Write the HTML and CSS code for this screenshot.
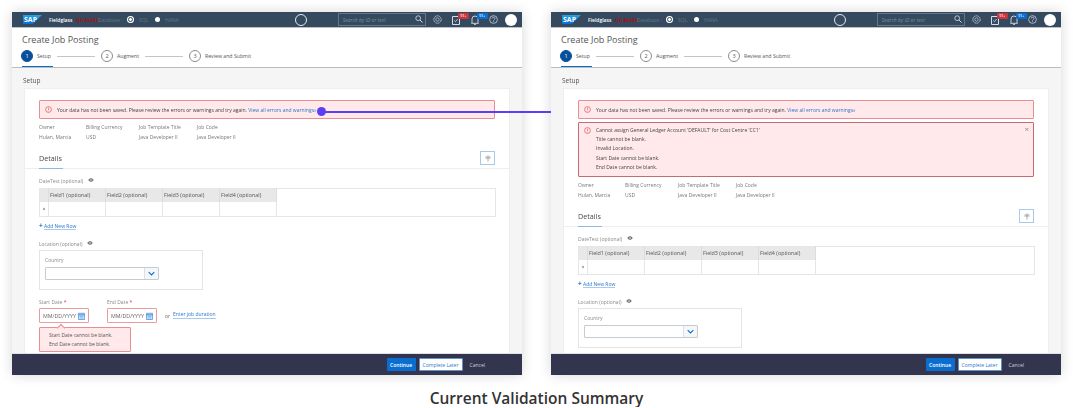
FILE: index.html
```html
<!DOCTYPE html>
<html lang="en">

<head>
    <meta charset="UTF-8">
    <meta name="viewport" content="width=device-width, initial-scale=1.0">
    <title>Current Validation Summary</title>
    <link rel="stylesheet" href="styles.css">
</head>

<body>
    <svg class="sprites" width="0" height="0">
        <symbol id="i-alert" viewBox="0 0 12 12"><circle cx="6" cy="6" r="5" fill="none" stroke="#d9363e" stroke-width="1"/><path d="M6 3v3.600M6 8v1" stroke="#d9363e" stroke-width="1"/></symbol>
        <symbol id="i-eye" viewBox="0 0 12 8"><path d="M.5 4C2 1.500 4 .5 6 .5S10 1.500 11.500 4C10 6.500 8 7.500 6 7.500S2 6.500 .5 4Z" fill="#777"/><circle cx="6" cy="4" r="1.700" fill="#fff"/><circle cx="6" cy="4" r="1" fill="#555"/></symbol>
        <symbol id="i-cal" viewBox="0 0 9 10"><path d="M.5 1.500h8v8h-8z" fill="#dcebfa" stroke="#4a90d9"/><path d="M.5 3.500h8" stroke="#4a90d9" stroke-width="1.500"/><path d="M2 5.500h5M2 7.500h5" stroke="#4a90d9" stroke-width=".8"/></symbol>
        <symbol id="i-chev" viewBox="0 0 10 6"><path d="M1 1l4 4 4-4" fill="none" stroke="#0a6ed1" stroke-width="1.600"/></symbol>
        <symbol id="i-search" viewBox="0 0 10 10"><circle cx="4" cy="4" r="3" fill="none" stroke="#d5dde6" stroke-width="1"/><path d="M6.200 6.200L9.500 9.500" stroke="#d5dde6" stroke-width="1.200"/></symbol>
        <symbol id="i-gear" viewBox="0 0 10 10"><circle cx="5" cy="5" r="4.100" fill="none" stroke="#c3ccd6" stroke-width="1" stroke-dasharray="1.700 .5"/><circle cx="5" cy="5" r="1.900" fill="none" stroke="#c3ccd6" stroke-width=".8"/></symbol>
        <symbol id="i-task" viewBox="0 0 8 10"><path d="M.5 1.500h7v8h-7z" fill="none" stroke="#d5dde6"/><path d="M2.300 5.500l1.200 1.200 2.200-2.700" fill="none" stroke="#d5dde6" stroke-width=".8"/></symbol>
        <symbol id="i-bell" viewBox="0 0 8 10"><path d="M1 7.500V4a3 3 0 0 1 6 0v3.500l.7.8H.3z" fill="none" stroke="#d5dde6" stroke-width=".9"/><path d="M3 9.300h2" stroke="#d5dde6"/></symbol>
        <symbol id="i-help" viewBox="0 0 10 10"><circle cx="5" cy="5" r="4.300" fill="none" stroke="#d5dde6" stroke-width=".8"/><path d="M3.400 3.900C3.400 2 6.700 2 6.700 3.900 6.700 5 5 5 5 6.300M5 7v.9" fill="none" stroke="#d5dde6" stroke-width=".8"/></symbol>
        <symbol id="i-cloud" viewBox="0 0 10 10"><path d="M1.500 6a3.500 4 0 0 1 7 0z" fill="#c4c8cc"/><path d="M5 3.500v6" stroke="#8f959b"/></symbol>
    </svg>

    <div class="stage">
        <div class="window">
            <header class="shell">
                <div class="sap-logo">SAP</div>
                <span class="brand">Fieldglass</span>
                <span class="mode">QA Mode</span>
                <span class="dim db">Database :</span>
                <span class="radio on"></span><span class="dim sql">SQL</span>
                <span class="radio"></span><span class="dim hana">HANA</span>
                <span class="ring"></span>
                <div class="search"><span>Search by ID or text</span><svg class="ic-search"><use href="#i-search"/></svg></div>
                <svg class="ic-gear"><use href="#i-gear"/></svg>
                <div class="notify"><svg class="ic-task"><use href="#i-task"/></svg><span class="badge red">99+</span></div>
                <div class="notify"><svg class="ic-task"><use href="#i-bell"/></svg><span class="badge blue">99+</span></div>
                <svg class="ic-help"><use href="#i-help"/></svg>
                <span class="avatar"></span>
            </header>
            <div class="title-bar">
                <h1>Create Job Posting</h1>
                <div class="steps">
                    <span class="step-no active">1</span><span class="step-name">Setup</span><span class="step-line"></span>
                    <span class="step-no">2</span><span class="step-name">Augment</span><span class="step-line"></span>
                    <span class="step-no">3</span><span class="step-name">Review and Submit</span>
                </div>
            </div>
            <main class="content">
                <h2>Setup</h2>
                <div class="card">
                    <div class="inner">
                        <div class="banner"><svg class="ic-alert"><use href="#i-alert"/></svg><span>Your data has not been saved. Please review the errors or warnings and try again. <a>View all errors and warnings»</a></span></div>
                        <div class="summary">
                            <div class="col-a"><p>Owner</p><p>Hulan, Marcia</p></div>
                            <div class="col-b"><p>Billing Currency</p><p>USD</p></div>
                            <div class="col-c"><p>Job Template Title</p><p>Java Developer II</p></div>
                            <div class="col-d"><p>Job Code</p><p>Java Developer II</p></div>
                        </div>
                    </div>
                    <div class="details-head">
                        <span class="tab">Details</span>
                        <span class="upload"><svg class="ic-cloud"><use href="#i-cloud"/></svg></span>
                    </div>
                    <div class="inner">
                        <div class="field-label table-label">DateTest (optional) <svg class="ic-eye"><use href="#i-eye"/></svg></div>
                        <table class="grid">
                            <colgroup><col class="c-x"><col class="c-f"><col class="c-f"><col class="c-f"><col class="c-f"><col></colgroup>
                            <tr><th></th><th>Field1 (optional)</th><th>Field2 (optional)</th><th>Field3 (optional)</th><th>Field4 (optional)</th><td class="rest" rowspan="2"></td></tr>
                            <tr class="row"><td class="x">×</td><td></td><td></td><td></td><td></td></tr>
                        </table>
                        <a class="add-row"><b>+</b> <span>Add New Row</span></a>
                        <div class="field-label loc-label">Location (optional) <svg class="ic-eye"><use href="#i-eye"/></svg></div>
                        <div class="loc-box">
                            <div class="field-label">Country</div>
                            <div class="select"><span class="select-btn"><svg class="ic-chev"><use href="#i-chev"/></svg></span></div>
                        </div>
                        <div class="dates">
                            <div class="date-a">
                                <div class="field-label">Start Date <i>*</i></div>
                                <div class="date-input"><span>MM/DD/YYYY</span><svg class="ic-cal"><use href="#i-cal"/></svg></div>
                            </div>
                            <div>
                                <div class="field-label">End Date <i>*</i></div>
                                <div class="date-input"><span>MM/DD/YYYY</span><svg class="ic-cal"><use href="#i-cal"/></svg></div>
                            </div>
                            <span class="or">or</span><a class="duration">Enter job duration</a>
                        </div>
                        <div class="date-error">
                            <p>Start Date cannot be blank.</p>
                            <p>End Date cannot be blank.</p>
                        </div>
                    </div>
                </div>
            </main>
            <footer class="actions">
                <span class="btn primary">Continue</span>
                <span class="btn outline">Complete Later</span>
                <span class="cancel">Cancel</span>
            </footer>
        </div>

        <div class="window">
            <header class="shell">
                <div class="sap-logo">SAP</div>
                <span class="brand">Fieldglass</span>
                <span class="mode">QA Mode</span>
                <span class="dim db">Database :</span>
                <span class="radio on"></span><span class="dim sql">SQL</span>
                <span class="radio"></span><span class="dim hana">HANA</span>
                <span class="ring"></span>
                <div class="search"><span>Search by ID or text</span><svg class="ic-search"><use href="#i-search"/></svg></div>
                <svg class="ic-gear"><use href="#i-gear"/></svg>
                <div class="notify"><svg class="ic-task"><use href="#i-task"/></svg><span class="badge red">99+</span></div>
                <div class="notify"><svg class="ic-task"><use href="#i-bell"/></svg><span class="badge blue">99+</span></div>
                <svg class="ic-help"><use href="#i-help"/></svg>
                <span class="avatar"></span>
            </header>
            <div class="title-bar">
                <h1>Create Job Posting</h1>
                <div class="steps">
                    <span class="step-no active">1</span><span class="step-name">Setup</span><span class="step-line"></span>
                    <span class="step-no">2</span><span class="step-name">Augment</span><span class="step-line"></span>
                    <span class="step-no">3</span><span class="step-name">Review and Submit</span>
                </div>
            </div>
            <main class="content">
                <h2>Setup</h2>
                <div class="card">
                    <div class="inner">
                        <div class="banner"><svg class="ic-alert"><use href="#i-alert"/></svg><span>Your data has not been saved. Please review the errors or warnings and try again. <a>View all errors and warnings»</a></span></div>
                        <div class="banner list">
                            <svg class="ic-alert"><use href="#i-alert"/></svg>
                            <div>
                                <p>Cannot assign General Ledger Account 'DEFAULT' for Cost Centre 'CC1'</p>
                                <p>Title cannot be blank.</p>
                                <p>Invalid Location.</p>
                                <p>Start Date cannot be blank.</p>
                                <p>End Date cannot be blank.</p>
                            </div>
                            <span class="close">×</span>
                        </div>
                        <div class="summary">
                            <div class="col-a"><p>Owner</p><p>Hulan, Marcia</p></div>
                            <div class="col-b"><p>Billing Currency</p><p>USD</p></div>
                            <div class="col-c"><p>Job Template Title</p><p>Java Developer II</p></div>
                            <div class="col-d"><p>Job Code</p><p>Java Developer II</p></div>
                        </div>
                    </div>
                    <div class="details-head">
                        <span class="tab">Details</span>
                        <span class="upload"><svg class="ic-cloud"><use href="#i-cloud"/></svg></span>
                    </div>
                    <div class="inner">
                        <div class="field-label table-label">DateTest (optional) <svg class="ic-eye"><use href="#i-eye"/></svg></div>
                        <table class="grid">
                            <colgroup><col class="c-x"><col class="c-f"><col class="c-f"><col class="c-f"><col class="c-f"><col></colgroup>
                            <tr><th></th><th>Field1 (optional)</th><th>Field2 (optional)</th><th>Field3 (optional)</th><th>Field4 (optional)</th><td class="rest" rowspan="2"></td></tr>
                            <tr class="row"><td class="x">×</td><td></td><td></td><td></td><td></td></tr>
                        </table>
                        <a class="add-row"><b>+</b> <span>Add New Row</span></a>
                        <div class="field-label loc-label">Location (optional) <svg class="ic-eye"><use href="#i-eye"/></svg></div>
                        <div class="loc-box">
                            <div class="field-label">Country</div>
                            <div class="select"><span class="select-btn"><svg class="ic-chev"><use href="#i-chev"/></svg></span></div>
                        </div>
                    </div>
                </div>
            </main>
            <footer class="actions">
                <span class="btn primary">Continue</span>
                <span class="btn outline">Complete Later</span>
                <span class="cancel">Cancel</span>
            </footer>
        </div>

        <div class="connector"><span class="dot"></span></div>
    </div>

    <p class="caption">Current Validation Summary</p>
</body>

</html>
```

FILE: styles.css
```css
* {
    margin: 0;
    padding: 0;
    box-sizing: border-box;
}

body {
    background-color: #fff;
    font-family: "Open Sans", "Liberation Sans", sans-serif;
    font-size: 5px;
    color: #555;
    overflow: hidden;
}

.sprites {
    position: absolute;
}

.stage {
    position: relative;
    display: flex;
    gap: 29px;
    padding: 12px 12px 0;
}

.window {
    width: 510px;
    height: 363px;
    display: flex;
    flex-direction: column;
    overflow: hidden;
    background-color: #f5f5f5;
    box-shadow: 0 0 12px rgba(0, 0, 0, 0.16);
    filter: blur(0.3px);
}

/* top bar */
.shell {
    height: 16px;
    flex: none;
    display: flex;
    align-items: center;
    padding-left: 11px;
    background-color: #354a5f;
    border-bottom: 1px solid #b9c0c7;
    color: #62748a;
    white-space: nowrap;
}

.sap-logo {
    width: 19px;
    height: 9px;
    padding-left: 1px;
    background: linear-gradient(#1fa4e8, #0a6ed1);
    clip-path: polygon(0 0, 100% 0, 52% 100%, 0 100%);
    color: #fff;
    font-size: 7px;
    font-weight: 700;
    line-height: 9px;
}

.brand {
    margin-left: 7px;
    width: 27px;
    color: #fff;
    font-weight: 600;
}

.mode {
    width: 22px;
    color: #a3141c;
    font-weight: 700;
}

.db {
    width: 30px;
}

.radio {
    width: 5px;
    height: 5px;
    border-radius: 50%;
    background-color: #fff;
}

.radio.on {
    border: 1px solid #354a5f;
    box-shadow: 0 0 0 1px #fff;
}

.sql {
    margin-left: 6px;
    width: 16px;
}

.hana {
    margin-left: 5px;
}

.ring {
    margin-left: 116px;
    width: 12px;
    height: 12px;
    border: 1.5px solid #e4e8ec;
    border-radius: 50%;
}

.search {
    margin-left: 31px;
    width: 88px;
    height: 13px;
    padding: 0 2px 0 4px;
    display: flex;
    align-items: center;
    justify-content: space-between;
    border: 1px solid #64778a;
    font-style: italic;
    color: #7f8fa0;
}

.ic-search {
    width: 8px;
    height: 8px;
    margin-bottom: 2px;
}

.ic-gear {
    margin-left: 7px;
    width: 9px;
    height: 9px;
}

.notify {
    position: relative;
    margin-left: 10px;
    width: 9px;
    height: 10px;
    display: flex;
}

.ic-task {
    width: 8px;
    height: 10px;
}

.badge {
    position: absolute;
    left: 6px;
    top: -2px;
    width: 11px;
    height: 6px;
    border-radius: 1px;
    color: #fff;
    font-size: 3.5px;
    line-height: 6px;
    text-align: center;
}

.badge.red {
    background-color: #c9353b;
}

.badge.blue {
    background-color: #0a6ed1;
}

.ic-help {
    margin-left: 9px;
    width: 9px;
    height: 9px;
}

.avatar {
    margin-left: 7px;
    width: 12px;
    height: 12px;
    border-radius: 50%;
    background-color: #fff;
}

/* title and steps */
.title-bar {
    position: relative;
    height: 40px;
    flex: none;
    padding: 4px 0 0 10px;
    background-color: #fff;
    border-bottom: 1px solid #bcbcbc;
}

.title-bar::after {
    content: "";
    position: absolute;
    left: 10px;
    bottom: 0;
    width: 31px;
    height: 1px;
    background-color: #0a6ed1;
}

.title-bar h1 {
    height: 15px;
    font-size: 9px;
    font-weight: 400;
    line-height: 15px;
    color: #555;
}

.steps {
    height: 21px;
    padding-bottom: 3px;
    display: flex;
    align-items: center;
    margin-left: -1px;
    font-size: 5.2px;
}

.step-no {
    width: 12px;
    height: 12px;
    flex: none;
    border: 0.7px solid #8c8c8c;
    border-radius: 50%;
    font-size: 5.5px;
    line-height: 10.5px;
    text-align: center;
}

.step-no.active {
    background-color: #0a4f9c;
    border-color: #0a4f9c;
    color: #fff;
}

.step-name {
    margin-left: 4px;
    color: #555;
}

.step-line {
    width: 38px;
    height: 1px;
    margin: 0 6px;
    background-color: #c4c4c4;
}

/* page body */
.content {
    flex: 1;
    min-height: 0;
    padding: 8px 12px 0;
    overflow: hidden;
}

.content h2 {
    height: 12px;
    margin-left: -1px;
    font-size: 6.5px;
    font-weight: 400;
    line-height: 10px;
    color: #555;
}

.card {
    height: 400px;
    background-color: #fff;
    border: 1px solid #eee;
}

.inner {
    padding: 0 14px;
}

.banner {
    height: 19px;
    margin-top: 11px;
    padding-left: 5px;
    display: flex;
    align-items: center;
    gap: 5px;
    background-color: #ffe9ea;
    border: 1px solid #e68e92;
    border-radius: 1px;
    color: #444;
}

.banner a {
    color: #2a76cc;
}

.ic-alert {
    width: 7px;
    height: 7px;
    flex: none;
}

.banner.list {
    position: relative;
    height: 55px;
    margin-top: 3px;
    align-items: flex-start;
    padding-top: 3px;
    border-color: #c76b72;
    line-height: 9.2px;
}

.banner.list .ic-alert {
    margin-top: 1px;
}

.close {
    position: absolute;
    right: 4px;
    top: 1px;
    font-size: 8px;
    color: #888;
}

.summary {
    display: flex;
    margin-top: 3px;
    line-height: 10px;
    color: #777;
}

.col-a {
    width: 47px;
}

.col-b {
    width: 53px;
}

.col-c {
    width: 58px;
}

.details-head {
    height: 24px;
    margin-top: 3px;
    padding: 0 14px;
    display: flex;
    justify-content: space-between;
    align-items: flex-end;
    border-bottom: 1px solid #eee;
}

.tab {
    height: 17px;
    margin-bottom: -1px;
    width: 24px;
    border-bottom: 1px solid #8db8e4;
    font-size: 7.2px;
    line-height: 13px;
    color: #4a4a4a;
}

.upload {
    width: 15px;
    height: 14px;
    margin-bottom: 3px;
    display: flex;
    align-items: center;
    justify-content: center;
    border: 1px solid #a9c9ea;
}

.ic-cloud {
    width: 8px;
    height: 8px;
}

.field-label {
    line-height: 8px;
    color: #8a8a8a;
}

.field-label i {
    color: #e0303a;
    font-style: normal;
}

.ic-eye {
    width: 6px;
    height: 4px;
    margin-left: 3px;
    vertical-align: 1px;
}

.table-label {
    margin-top: 8px;
    height: 11px;
}

.grid {
    width: 457px;
    height: 29px;
    table-layout: fixed;
    border-collapse: collapse;
    border: 1px solid #e6e6e6;
    font-size: 5.4px;
}

.c-x {
    width: 9px;
}

.c-f {
    width: 57px;
}

.grid th {
    height: 13px;
    padding-left: 1px;
    background-color: #e8e8e8;
    border-right: 1px solid #ddd;
    font-weight: 400;
    text-align: left;
    color: #555;
}

.grid td {
    border-right: 1px solid #e6e6e6;
    background-color: #fff;
}

.grid .x {
    text-align: center;
    color: #555;
}

.rest {
    border-right: 0;
}

.add-row {
    display: block;
    margin-top: 5px;
    height: 9px;
    line-height: 8px;
    color: #2a76cc;
}

.add-row b {
    font-size: 6.5px;
}

.add-row span {
    border-bottom: 1px solid #a9c9ea;
}

.loc-label {
    margin-top: 9px;
}

.loc-box {
    width: 164px;
    height: 40px;
    margin-top: 2px;
    padding: 5px 5px 0;
    border: 1px solid #e4e4e4;
}

.select {
    width: 114px;
    height: 13px;
    margin-top: 3px;
    display: flex;
    justify-content: flex-end;
    border: 1px solid #c3ccd4;
    border-radius: 1px;
}

.select-btn {
    width: 14px;
    display: flex;
    align-items: center;
    justify-content: center;
    background-color: #f5f6f7;
    border-left: 1px solid #dcdfe3;
}

.ic-chev {
    width: 7px;
    height: 5px;
}

.dates {
    display: flex;
    align-items: flex-end;
    margin-top: 8px;
}

.date-a {
    margin-right: 18px;
}

.date-input {
    width: 50px;
    height: 15px;
    margin-top: 2px;
    padding: 0 3px;
    display: flex;
    align-items: center;
    justify-content: space-between;
    border: 1px solid #ed9aa0;
    border-radius: 1px;
    background-color: #fff;
    color: #666;
    font-size: 5.3px;
}

.ic-cal {
    width: 7px;
    height: 8px;
}

.or {
    margin-left: 8px;
    margin-bottom: 4px;
    color: #666;
}

.duration {
    margin-left: 3px;
    margin-bottom: 4px;
    color: #2a76cc;
    border-bottom: 1px solid #a9c9ea;
    line-height: 7px;
}

.date-error {
    position: relative;
    width: 92px;
    height: 25px;
    margin-top: 4px;
    padding: 3px 0 0 9px;
    background-color: #ffe9ea;
    border: 1px solid #e68e92;
    border-radius: 1px;
    line-height: 9.2px;
    color: #555;
}

.date-error::before {
    content: "";
    position: absolute;
    left: 18px;
    top: -3px;
    width: 5px;
    height: 5px;
    background-color: #ffe9ea;
    border-left: 1px solid #e68e92;
    border-top: 1px solid #e68e92;
    transform: rotate(45deg);
}

/* bottom bar */
.actions {
    height: 22px;
    flex: none;
    display: flex;
    align-items: center;
    justify-content: flex-end;
    padding-right: 37px;
    background-color: #33354f;
    border-top: 1px solid #dfe1e6;
}

.btn {
    height: 13px;
    display: flex;
    align-items: center;
    justify-content: center;
    border-radius: 1px;
}

.primary {
    width: 29px;
    background-color: #0a6ed1;
    color: #fff;
    font-weight: 600;
}

.outline {
    width: 44px;
    margin-left: 3px;
    background-color: #fff;
    border: 1px solid #5e92cc;
    color: #2a76cc;
}

.cancel {
    margin-left: 7px;
    color: #cfd0d8;
}

/* purple marker between the two windows */
.connector {
    position: absolute;
    left: 322px;
    top: 111px;
    width: 229px;
    height: 1.5px;
    background-color: #5b3ff5;
}

.dot {
    position: absolute;
    left: -5px;
    top: -4px;
    width: 9px;
    height: 9px;
    border-radius: 50%;
    background-color: #5b3ff5;
}

.caption {
    margin-top: 14px;
    font-size: 15.5px;
    font-weight: 600;
    line-height: 18px;
    text-align: center;
    color: #333;
}
```
